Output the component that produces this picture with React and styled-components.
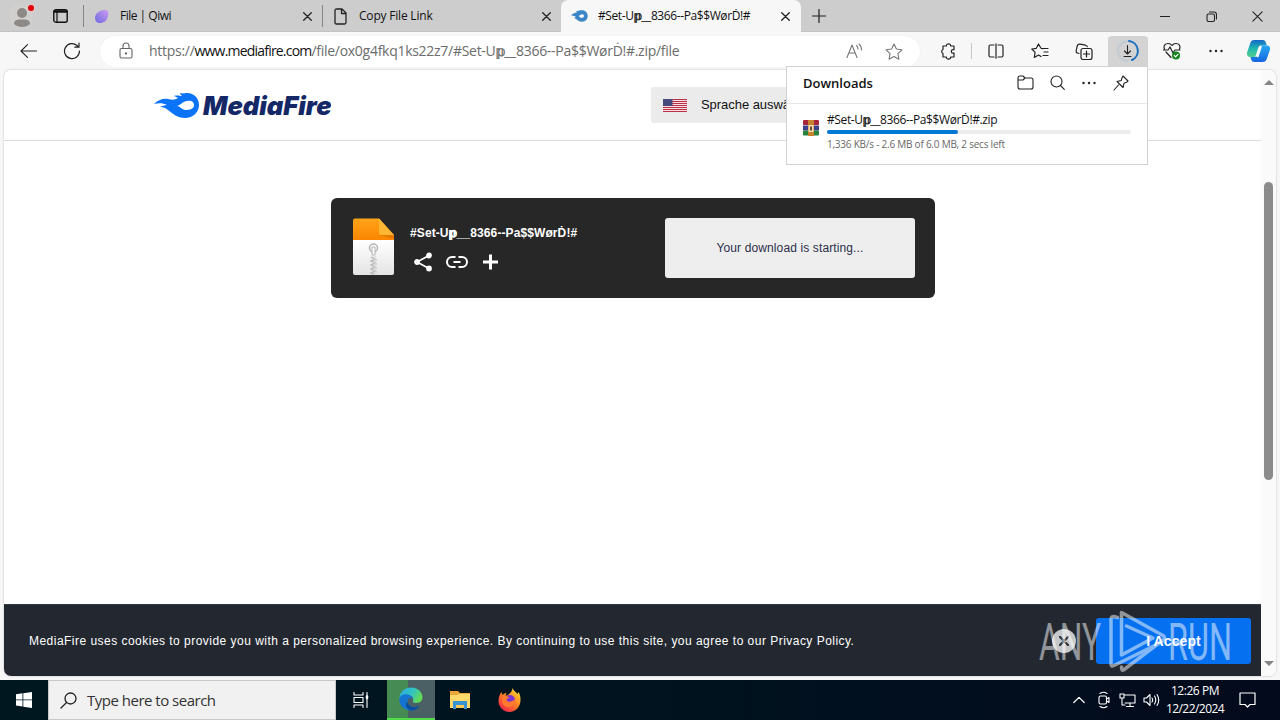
import React from 'react';
import styled, { createGlobalStyle } from 'styled-components';

const GlobalStyle = createGlobalStyle`
  * {
    box-sizing: border-box;
  }

  body {
    margin: 0;
    overflow: hidden;
  }

  svg {
    display: block;
    flex: none;
  }
`;

const uiFont = '"Open Sans", "Noto Sans", sans-serif';
const pageFont = '"Liberation Sans", Arial, sans-serif';

const Desktop = styled.div`
  display: flex;
  flex-direction: column;

  width: 1280px;
  height: 720px;

  background: #f7f7f7;
  color: #111;
  font-family: ${uiFont};
`;

const Label = styled.span`
  color: ${({ $color }) => $color || 'inherit'};
  font-size: ${({ $size }) => $size || 12}px;
  font-weight: ${({ $weight }) => $weight || 400};
  letter-spacing: ${({ $track }) => $track || 0}px;
  line-height: ${({ $line }) => $line || 16}px;
  white-space: pre;
`;

const HeavyGlyph = styled.span`
  margin-right: -1px;

  -webkit-text-stroke: 0.4px currentColor;
`;

const Slot = styled.div`
  display: flex;
  flex: none;
  align-items: center;
  justify-content: center;

  width: ${({ $w }) => $w}px;
  height: ${({ $h }) => ($h ? `${$h}px` : '100%')};
`;

/* ---------- tab strip ---------- */

const TabStrip = styled.div`
  display: flex;
  flex: none;

  height: 32px;

  background: #cdcdcd;
  box-shadow: inset 0 -1px 0 #c3c3c3;
`;

const Tab = styled.div`
  display: flex;
  flex: none;
  align-items: center;

  width: ${({ $w }) => $w}px;
  height: 32px;
  padding-left: ${({ $active }) => ($active ? 10 : 11)}px;

  background: ${({ $active }) => ($active ? '#f7f7f7' : 'transparent')};
  border-left: ${({ $active }) => ($active ? '0' : '1px solid #7c7c7c')};
  border-image: ${({ $active }) =>
    $active ? 'none' : 'linear-gradient(transparent 6px, #858585 6px, #858585 26px, transparent 26px) 1'};
  border-radius: ${({ $active }) => ($active ? '7px 7px 0 0' : '0')};
`;

const TabTitle = styled(Label)`
  flex: 1;

  margin-left: 10px;
`;

const Spacer = styled.div`
  flex: 1;
`;

/* ---------- toolbar ---------- */

const Toolbar = styled.div`
  display: flex;
  flex: none;
  align-items: center;

  height: 38px;
  padding: 0 0 0 6px;
`;

const AddressBar = styled.div`
  display: flex;
  flex: none;
  align-items: center;

  width: 820px;
  height: 31px;
  margin: 0 6px;
  padding: 0 6px 0 16px;

  background: #fff;
  border-radius: 16px;
  box-shadow: 0 0 1px #ddd;
`;

const Url = styled(Label)`
  flex: 1;

  margin-left: 13px;

  b {
    color: #111;
    font-weight: 400;
    letter-spacing: ${({ $hostTrack }) => $hostTrack}px;
  }
`;

const Divider = styled.div`
  width: 1px;
  height: 16px;
  margin: 0 1px;

  background: #c8c8c8;
`;

const DownloadButton = styled.div`
  display: flex;
  align-items: center;
  justify-content: center;

  width: 40px;
  height: 30px;

  background: #d3d3d3;
  border-radius: 4px 4px 0 0;
`;

/* ---------- web page ---------- */

const Viewport = styled.div`
  display: flex;
  flex: none;

  width: 1272px;
  height: 606px;
  margin: 0 4px 4px;
  overflow: hidden;

  background: #fff;
  border-radius: 7px;
  box-shadow: 0 0 1px 1px #e2e2e2;
`;

const Page = styled.div`
  display: flex;
  flex: 1;
  flex-direction: column;

  font-family: ${pageFont};
`;

const PageHeader = styled.header`
  display: flex;
  align-items: center;

  height: 71px;
  padding-left: 147px;

  border-bottom: 1px solid #dcdcdc;
`;

const LanguageSelect = styled.div`
  display: flex;
  align-items: center;

  width: 230px;
  height: 36px;
  margin-left: 320px;
  padding-left: 12px;

  background: #ebebeb;
  border-radius: 2px;

  span {
    margin-left: 14px;
  }
`;

const FileCard = styled.section`
  display: flex;
  align-items: center;

  width: 604px;
  height: 100px;
  margin: 57px 0 0 327px;
  padding: 0 20px 0 21px;

  background: #272727;
  border-radius: 6px;
`;

const FileInfo = styled.div`
  display: flex;
  flex: 1;
  flex-direction: column;
  gap: 11px;

  margin: 0 0 0 15px;
`;

const FileActions = styled.div`
  display: flex;
  gap: 12px;

  padding-left: 2px;
`;

const StatusBox = styled.div`
  display: flex;
  align-items: center;
  justify-content: center;

  width: 250px;
  height: 60px;

  background: #eee;
  border-radius: 3px;
`;

const CookieBar = styled.footer`
  display: flex;
  align-items: center;

  height: 72px;
  margin-top: auto;
  padding: 0 10px 0 25px;

  background: #232830;
  border-top: 1px solid #353a42;
`;

const CloseCircle = styled.div`
  display: flex;
  align-items: center;
  justify-content: center;

  width: 24px;
  height: 24px;
  margin: 0 20px 0 auto;

  background: #c6c7c8;
  border-radius: 50%;
`;

const AcceptButton = styled.div`
  display: flex;
  align-items: center;
  justify-content: center;

  width: 155px;
  height: 46px;

  background: #0570f0;
  border-radius: 3px;
`;

const Scrollbar = styled.div`
  display: flex;
  flex: none;
  flex-direction: column;
  align-items: center;

  width: 15px;
  padding: 10px 0;

  background: #fafafa;
`;

const Arrow = styled.div`
  border: 5px solid transparent;
  border-top-width: ${({ $down }) => ($down ? 5 : 0)}px;
  border-bottom-width: ${({ $down }) => ($down ? 0 : 5)}px;
  border-top-color: #858585;
  border-bottom-color: #858585;
`;

const Thumb = styled.div`
  width: 9px;
  height: 298px;
  margin: 97px 0 auto;

  background: #8b8b8b;
  border-radius: 5px;
`;

/* ---------- downloads flyout ---------- */

const Flyout = styled.div`
  position: absolute;
  top: 66px;
  left: 786px;

  display: flex;
  flex-direction: column;

  width: 362px;
  height: 99px;

  background: #fff;
  border: 1px solid #d2d2d2;
`;

const FlyoutHeader = styled.div`
  display: flex;
  flex: none;
  align-items: center;

  height: 37px;
  padding: 0 10px 5px 16px;

  border-bottom: 1px solid #e8e8e8;
`;

const DownloadItem = styled.div`
  display: flex;
  gap: 8px;

  padding: 8px 16px 0;
`;

const DownloadText = styled.div`
  display: flex;
  flex: 1;
  flex-direction: column;
`;

const Track = styled.div`
  height: 4px;
  margin: 2px 0;

  background: #ececec;
  border-radius: 2px;
`;

const TrackFill = styled.div`
  height: 4px;

  background: #0078d4;
  border-radius: 2px;
`;

/* ---------- taskbar ---------- */

const Taskbar = styled.div`
  display: flex;
  flex: none;
  align-items: center;

  height: 40px;

  background: linear-gradient(90deg, #00171f, #00131f 50%, #030a1c);
`;

const SearchBox = styled.div`
  display: flex;
  align-items: center;

  width: 288px;
  height: 40px;
  padding-left: 11px;

  background: #f1f1f1;
  border: 1px solid #c6c8c9;

  span {
    margin-left: 10px;
  }
`;

const EdgeButton = styled.div`
  display: flex;
  align-items: center;
  justify-content: center;

  width: 48px;
  height: 40px;

  background: linear-gradient(90deg, #468b53 21px, #4a6065 21px);
  border-bottom: 2px solid #52dc4a;
`;

const Clock = styled.div`
  display: flex;
  flex-direction: column;
  align-items: center;

  width: 64px;

  color: #fff;
`;

const Watermark = styled.div`
  position: absolute;
  top: 604px;
  left: 1034px;
`;

/* ---------- drawings ---------- */

function Icon({ w = 18, h, stroke = '#222', sw = 1.1, box, children }) {
  const height = h || w;
  return (
    <svg
      width={w}
      height={height}
      viewBox={box || `0 0 ${w} ${height}`}
      fill="none"
      stroke={stroke}
      strokeWidth={sw}
      strokeLinecap="round"
      strokeLinejoin="round"
    >
      {children}
    </svg>
  );
}

function CloseIcon({ size = 9, sw = 1.3, stroke }) {
  return (
    <Icon w={size} box="0 0 9 9" sw={sw} stroke={stroke}>
      <path d="M.7.7l7.6 7.6M8.3.7L.7 8.3" />
    </Icon>
  );
}

function DotsIcon() {
  return (
    <svg width="14" height="4" viewBox="0 0 14 4" fill="#222">
      <circle cx="1.5" cy="2" r="1.2" />
      <circle cx="7" cy="2" r="1.2" />
      <circle cx="12.5" cy="2" r="1.2" />
    </svg>
  );
}

function ProfileIcon() {
  return (
    <svg width="26" height="30" viewBox="0 0 26 30">
      <circle cx="12" cy="15" r="12" fill="#d2d0ce" />
      <circle cx="13" cy="12" r="5" fill="#8c8986" />
      <path d="M5 23c0-4.500 4-4.500 8-4.500s8 0 8 4.500c-2 2-5 3-8 3s-6-1-8-3z" fill="#8c8986" />
      <circle cx="22" cy="7" r="4" fill="#e3c9c9" />
      <circle cx="22" cy="7" r="3" fill="#e0000c" />
    </svg>
  );
}

function FlameIcon({ w, h, color }) {
  return (
    <svg width={w} height={h} viewBox="0 0 46 26">
      <path
        fill={color}
        fillRule="evenodd"
        d="M0 12c4-4 9-6 14-5 4 1 7 1 10-1-2-1-3-2-4-2 3-1 6 0 8 0-1-1-2-2-2-3 3 1 4 0 7 0 7 0 12 5 12 12s-6 13-14 13c-8 0-13-5-17-8-2-2-5-3-8-3 2-1 5-2 7-2-4-2-8-2-13-1zm23 2c3 0 4 3 8 4 5 0 9-1 9-5s-4-5-7-4c-4 0-6 4-10 5z"
      />
    </svg>
  );
}

function SmallFlameIcon() {
  return (
    <svg width="17" height="12" viewBox="0 0 17 12">
      <path
        fill="#3b86c6"
        fillRule="evenodd"
        d="M0 5.500C2 3 4 3 6 2.500L5 1.500C7 1 8 .3 11 .3c3.500 0 5.700 2.500 5.700 5.700S14.500 11.700 11 11.700C7 11.700 6 9 3 8l2-1C3.500 6 2 5.500 0 5.500zm8 .7c1 2 5 2.300 5-.2s-3.500-2.300-5 .2z"
      />
    </svg>
  );
}

function MediaFireLogo() {
  return (
    <svg width="180" height="28" viewBox="0 0 180 28">
      <g transform="translate(3 1)">
        <FlameIcon w={46} h={26} color="#0a73f8" />
      </g>
      <text
        x="52"
        y="24"
        fill="#142766"
        fontFamily="Inter, sans-serif"
        fontSize="26"
        fontStyle="italic"
        fontWeight="900"
        textLength="128.500"
        lengthAdjust="spacingAndGlyphs"
      >
        MediaFire
      </text>
    </svg>
  );
}

function FlagIcon() {
  return (
    <svg width="24" height="13" viewBox="0 0 24 13">
      <rect width="24" height="13" fill="#f3dfe3" />
      {[0, 2, 4, 6, 8, 10, 12].map((y) => (
        <rect key={y} y={y} width="24" height="1" fill="#bd3146" />
      ))}
      <rect width="9.5" height="7" fill="#454a7c" />
    </svg>
  );
}

function ZipFileIcon() {
  return (
    <svg width="43" height="60" viewBox="0 0 43 60">
      <defs>
        <linearGradient id="paper" x1="0" y1="0" x2="0" y2="1">
          <stop offset="0" stopColor="#fff" />
          <stop offset="1" stopColor="#e4e4e4" />
        </linearGradient>
        <linearGradient id="cap" x1="0" y1="0" x2="0" y2="1">
          <stop offset="0" stopColor="#ffa41a" />
          <stop offset="1" stopColor="#fb8500" />
        </linearGradient>
      </defs>
      <path d="M1 22h41v33q0 2-2 2H3q-2 0-2-2z" fill="url(#paper)" />
      <path d="M1 22V2.500q0-2 2-2h24l15 16.500v5z" fill="url(#cap)" />
      <path d="M27 .5V15q0 2 2 2h13z" fill="#ffb733" />
      <path d="M27 17h15v4z" fill="#e77b00" />
      <circle cx="21.500" cy="30" r="4" fill="none" stroke="#b4b4b4" strokeWidth="1.500" />
      <path d="M20 29h3v8h-3z" fill="#fff" stroke="#b4b4b4" />
      <path d="M19 39l4 2-4 2 4 2-4 2 4 2-4 2 4 2-4 2 3 1.500" fill="none" stroke="#bdbdbd" strokeWidth="1.500" />
      <path d="M24 38l-3 2 4 2-4 2 4 2-4 2 4 2-4 2 4 2-3 2" fill="none" stroke="#d2d2d2" />
    </svg>
  );
}

function RarIcon() {
  return (
    <svg width="16" height="16" viewBox="0 0 16 16">
      <rect width="16" height="5" rx="1" fill="#a8243a" />
      <rect y="5.500" width="16" height="5" fill="#3c3f8e" />
      <rect y="10.500" width="16" height="5" rx="1" fill="#26813e" />
      <rect x="5" width="6" height="16" fill="#c8812e" />
      <rect x="5.500" y="5" width="5" height="7" fill="#f1e0b8" />
      <rect x="7" y="6.500" width="2" height="4" fill="#6c4a24" />
    </svg>
  );
}

function CopilotIcon() {
  return (
    <svg width="25" height="24" viewBox="0 0 24 24">
      <defs>
        <linearGradient id="coA" x1="0" y1="0" x2="0" y2="1">
          <stop offset="0" stopColor="#1768c9" />
          <stop offset=".5" stopColor="#1fb8b0" />
          <stop offset="1" stopColor="#54d18a" />
        </linearGradient>
        <linearGradient id="coB" x1="0" y1="0" x2="0" y2="1">
          <stop offset="0" stopColor="#27a8f0" />
          <stop offset="1" stopColor="#1666e0" />
        </linearGradient>
      </defs>
      <path d="M8 1h8c2 0 3 1 3.500 3l.8 2.500H15c-2 0-3 1-3.500 3l-2 6.500c-.5 1.500-1 2-2.500 2H3.500C1 18 0 16 .6 13.500l3-9C4.300 2 5.500 1 8 1z" fill="url(#coA)" />
      <path d="M16 23H8c-2 0-3-1-3.500-3l-.6-2H8c2 0 3-1 3.500-3l2-6.500C14 7 14.500 6.500 16 6.500h4.500C23 6.500 24 8.500 23.400 11l-3 8.500C19.700 22 18.500 23 16 23z" fill="url(#coB)" />
      <path d="M14 8l-3 9" stroke="#f2f8fb" strokeWidth="2.500" strokeLinecap="round" />
    </svg>
  );
}

function EdgeIcon() {
  return (
    <svg width="24" height="24" viewBox="0 0 24 24">
      <defs>
        <linearGradient id="edA" x1="0" y1="0" x2="1" y2=".4">
          <stop offset="0" stopColor="#2aa8e2" />
          <stop offset=".6" stopColor="#31c4c0" />
          <stop offset="1" stopColor="#62d957" />
        </linearGradient>
      </defs>
      <path d="M.3 11C1 4.500 6 .5 12 .5c7 0 11.500 5 11.500 9.800 0 3.700-2.700 5.700-6 5.700-3 0-4.200-1-3.700-2 .8-1.300.8-5.500-4-5.500C5 8.500 1 9.500.3 11z" fill="url(#edA)" />
      <path d="M.3 11C1.500 8 5.500 6.700 9 7.500c3 .7 4.700 2.500 4.900 4.500-1-1.800-5.400-1.500-5.400 2.500 0 4.500 6 7.500 12 4-2 3.500-5 5-8.500 5C5 23.500-.3 18 .3 11z" fill="#1474cf" />
      <path d="M8.500 14.500c0 4.500 6 7.500 12 4-2 3.500-5 5-8 5-4.500-.5-7.500-6-4-9z" fill="#0c4e9b" />
    </svg>
  );
}

function FolderIcon() {
  return (
    <svg width="22" height="20" viewBox="0 0 22 20">
      <path d="M1 1h8l2 2h10v15H1z" fill="#eea83a" />
      <path d="M1 5h7l2-1h11v14H1z" fill="#ffd96b" />
      <path d="M4 11h14v8h-3v-4H7v4H4z" fill="#3b92d1" />
      <rect x="7" y="15" width="8" height="3" fill="#f7cb55" />
    </svg>
  );
}

function FirefoxIcon() {
  return (
    <svg width="23" height="24" viewBox="0 0 22 24">
      <defs>
        <linearGradient id="ff" x1=".9" y1="0" x2=".2" y2="1">
          <stop offset="0" stopColor="#ffe33b" />
          <stop offset=".45" stopColor="#ff8a22" />
          <stop offset="1" stopColor="#f0204f" />
        </linearGradient>
      </defs>
      <path d="M14 0c1 3 4 4 5 6l1-2c2 3 2 6 2 8 0 7-5 12-11 12S0 19 0 13c0-4 1-6 3-9l1 3c1-1 2-2 4-2l-1 3c3-1 7-4 7-8z" fill="url(#ff)" />
      <circle cx="11.500" cy="12" r="5" fill="#7a35d2" />
      <path d="M4 8c3-1 5 0 7 2-2 0-3 1-3 2 1 3 6 2 8-1 1 5-2 8-6 8-5 0-8-5-6-11z" fill="#ff7a2e" />
    </svg>
  );
}

/* ---------- screen ---------- */

function FileName({ suffix = '' }) {
  return (
    <>
      #Set-U
      <HeavyGlyph>𝕡</HeavyGlyph>
      {`__8366--Pa$$WørḊ!#${suffix}`}
    </>
  );
}

function BrowserTabs() {
  return (
    <TabStrip>
      <Slot $w={44}>
        <ProfileIcon />
      </Slot>
      <Slot $w={32}>
        <Icon w={15} h={14} sw={1.4} stroke="#111">
          <rect x=".8" y=".8" width="13.400" height="12.400" rx="2" />
          <path d="M1.500 2.500h12" strokeWidth="2.500" />
          <path d="M4 3v10" strokeWidth="1.200" />
        </Icon>
      </Slot>
      <Slot $w={7} />
      <Tab $w={239}>
        <svg width="15" height="15" viewBox="0 0 15 15">
          <defs>
            <linearGradient id="qiwi" x1="1" y1="0" x2="0" y2="1">
              <stop offset="0" stopColor="#cf9bf0" />
              <stop offset="1" stopColor="#6c6ae0" />
            </linearGradient>
          </defs>
          <path d="M0 9c0-5 5-8 10-8 3 0 4 2 3 6-1 5-4 7-8 7-3 0-5-2-5-5z" fill="url(#qiwi)" />
        </svg>
        <TabTitle $track={-0.5}>File | Qiwi</TabTitle>
        <Slot $w={30}>
          <CloseIcon />
        </Slot>
      </Tab>
      <Tab $w={239}>
        <Icon w={15} h={17} sw={1.3}>
          <path d="M1 2.500q0-1.500 1.500-1.500H8l4 4v9.500q0 1.500-1.500 1.500h-8Q1 16 1 14.500zM7.500 1v4.500H12" />
        </Icon>
        <TabTitle $track={-0.2}>Copy File Link</TabTitle>
        <Slot $w={30}>
          <CloseIcon />
        </Slot>
      </Tab>
      <Tab $w={240} $active>
        <SmallFlameIcon />
        <TabTitle $track={-0.4}>
          <FileName />
        </TabTitle>
        <Slot $w={32}>
          <CloseIcon />
        </Slot>
      </Tab>
      <Slot $w={36}>
        <Icon w={14} sw={1.2}>
          <path d="M7 .5v13M.5 7h13" />
        </Icon>
      </Slot>
      <Spacer />
      <Slot $w={46}>
        <Icon w={10} sw={1}>
          <path d="M0 5.500h10" />
        </Icon>
      </Slot>
      <Slot $w={46}>
        <Icon w={11} sw={1.1}>
          <rect x="1" y="3" width="7.500" height="7.500" rx="1.500" />
          <path d="M3.500 1h4.500q2.500 0 2.500 2.500V8" />
        </Icon>
      </Slot>
      <Slot $w={46}>
        <CloseIcon size={11} sw={0.9} />
      </Slot>
    </TabStrip>
  );
}

function BrowserToolbar() {
  return (
    <Toolbar>
      <Slot $w={44}>
        <Icon w={17} h={14}>
          <path d="M7.500.7L1 7l6.500 6.300M1 7h15.500" />
        </Icon>
      </Slot>
      <Slot $w={44}>
        <Icon w={18} sw={1.2}>
          <path d="M16.500 9A7.500 7.500 0 1 1 14 3.500l1.500 1.500M16 1v4.200h-4.200" />
        </Icon>
      </Slot>
      <AddressBar>
        <Icon w={20} h={18} stroke="#666">
          <path d="M5.500 6.500h9q1.500 0 1.500 1.500v6.500q0 1.500-1.500 1.500h-9Q4 16 4 14.500V8q0-1.500 1.500-1.500zM7 6.500V4q0-3 3-3t3 3v2.500" />
          <circle cx="10" cy="11.500" r=".6" fill="#666" />
        </Icon>
        <Url $size={14} $line={20} $color="#6c6c6c" $track={-0.28} $hostTrack={-0.8}>
          https://
          <b>www.mediafire.com</b>
          /file/ox0g4fkq1ks22z7/
          <FileName suffix=".zip/file" />
        </Url>
        <Slot $w={40}>
          <Icon w={17} h={16} stroke="#777">
            <path d="M1 14.500L6 2l5 12.500M2.800 10h6.500M10.500 2.500q1.500 1.300 1.500 3.500M13 1q2.500 2 2.500 6" />
          </Icon>
        </Slot>
        <Slot $w={40}>
          <Icon w={18} h={17} stroke="#777">
            <path d="M9 1l2.400 5 5.500.8-4 3.900 1 5.500L9 13.600l-4.900 2.600 1-5.500-4-3.900 5.500-.8z" />
          </Icon>
        </Slot>
      </AddressBar>
      <Slot $w={44}>
        <Icon w={17} h={18} sw={1.2}>
          <path d="M3 4h3.300a2.200 2.200 0 1 1 4.400 0H14v3.700h-1a1.700 1.700 0 0 0 0 3.400h1V15h-3.300a2.200 2.200 0 0 1-4.400 0H3v-3.500a2.200 2.200 0 0 1 0-4z" />
        </Icon>
      </Slot>
      <Divider />
      <Slot $w={45}>
        <Icon w={16} h={16} sw={1.2}>
          <path d="M6 2H2.500Q1 2 1 3.500v9Q1 14 2.500 14H6M10 2h3.500Q15 2 15 3.500v9q0 1.500-1.500 1.500H10M8 .8v14.400" />
        </Icon>
      </Slot>
      <Slot $w={44}>
        <Icon w={18} h={16} sw={1.2}>
          <path d="M11.500 5.500h5.500M13 9h4M12 12.500h5M10 5.200L7.500 1 5.300 5.300.8 6l3.300 3.300-.8 5.200L7.500 12l2.500 1.500M10 5.200l1.500.5" />
        </Icon>
      </Slot>
      <Slot $w={44}>
        <Icon w={18} h={17} sw={1.2}>
          <rect x="6" y="5.500" width="11" height="11" rx="2" />
          <path d="M11.500 8v6M8.500 11h6M4 10.500L2.500 10Q.8 9.500 1.200 7.500l1-4.500Q2.800.8 5 1.200l5.500 1q1.500.5 1.800 1.500" />
        </Icon>
      </Slot>
      <Slot $w={44}>
        <DownloadButton>
          <Icon w={22} h={24} sw={1.1}>
            <path d="M10.500 6.500v8.500M7.500 12l3 3 3-3M7 17.500h7" />
            <path d="M11 2a10 10 0 1 0 0 20" stroke="#c2cad2" strokeWidth="2" />
            <path d="M12 2a10 10 0 0 1 3 19" stroke="#1c6fc0" strokeWidth="2" />
          </Icon>
        </DownloadButton>
      </Slot>
      <Slot $w={44}>
        <Icon w={18} h={18} sw={1.2}>
          <path d="M1.500 7C0 3.500 2.500 1.500 5 1.500c2 0 3.300 1 4 2 .7-1 2-2 4-2 2.500 0 5 2 3.500 5.500M3 10l5 5.500M0.500 8H5l2-3 3 6 2-3h5" />
          <circle cx="13" cy="13.500" r="4" fill="#16851e" stroke="none" />
          <path d="M11.300 13.500l1.300 1.300 2.300-2.500" stroke="#fff" />
        </Icon>
      </Slot>
      <Slot $w={44}>
        <DotsIcon />
      </Slot>
      <Slot $w={40}>
        <CopilotIcon />
      </Slot>
    </Toolbar>
  );
}

function DownloadsFlyout({ progress }) {
  return (
    <Flyout>
      <FlyoutHeader>
        <Label $size={13} $weight={600}>
          Downloads
        </Label>
        <Spacer />
        <Slot $w={32}>
          <Icon w={17} h={15}>
            <path d="M1 3Q1 1 3 1h3l2 2h6q2 0 2 2v7q0 2-2 2H3q-2 0-2-2zM1 5h5l2-2" />
          </Icon>
        </Slot>
        <Slot $w={32}>
          <Icon w={15}>
            <circle cx="6.500" cy="6.500" r="5.500" />
            <path d="M10.500 10.500L14.300 14.300" />
          </Icon>
        </Slot>
        <Slot $w={32}>
          <DotsIcon />
        </Slot>
        <Slot $w={32}>
          <Icon w={16}>
            <path d="M10 1l5 5-1 1-3 1.300-1 4.200-6-6 4.200-1 1-3.200zM5.500 10L1 15" />
          </Icon>
        </Slot>
      </FlyoutHeader>
      <DownloadItem>
        <Slot $w={16} $h={32}>
          <RarIcon />
        </Slot>
        <DownloadText>
          <Label $track={-0.38}>
            <FileName suffix=".zip" />
          </Label>
          <Track>
            <TrackFill style={{ width: `${progress}%` }} />
          </Track>
          <Label $size={10} $color="#686868" $track={-0.23}>
            1,336 KB/s - 2.6 MB of 6.0 MB, 2 secs left
          </Label>
        </DownloadText>
      </DownloadItem>
    </Flyout>
  );
}

function WebPage() {
  return (
    <Viewport>
      <Page>
        <PageHeader>
          <MediaFireLogo />
          <LanguageSelect>
            <FlagIcon />
            <Label $size={13} $track={-0.05}>
              Sprache auswählen
            </Label>
          </LanguageSelect>
        </PageHeader>
        <FileCard>
          <ZipFileIcon />
          <FileInfo>
            <Label $size={12} $weight={700} $color="#fff" $track={0.1}>
              <FileName />
            </Label>
            <FileActions>
              <Icon w={22} h={20} stroke="#fff" sw={1.8}>
                <path d="M17 3.500L5 10l12 6.500" />
                <circle cx="17" cy="3.500" r="2" fill="#fff" />
                <circle cx="5" cy="10" r="2" fill="#fff" />
                <circle cx="17" cy="16.500" r="2" fill="#fff" />
              </Icon>
              <Icon w={22} h={20} stroke="#fff" sw={2}>
                <path d="M9.500 5H6a5 5 0 0 0 0 10h3.500M12.500 5H16a5 5 0 0 1 0 10h-3.500M7.500 10h7" strokeLinecap="butt" />
              </Icon>
              <Icon w={22} h={20} stroke="#fff" sw={3}>
                <path d="M10.500 2.500v15M3 10h15" strokeLinecap="butt" />
              </Icon>
            </FileActions>
          </FileInfo>
          <StatusBox>
            <Label $size={12} $color="#2c2e4a" $track={0.12}>
              Your download is starting...
            </Label>
          </StatusBox>
        </FileCard>
        <CookieBar>
          <Label $size={12} $color="#fff" $track={0.475}>
            MediaFire uses cookies to provide you with a personalized browsing experience. By continuing to use this
            {' site, you agree to our Privacy Policy.'}
          </Label>
          <CloseCircle>
            <CloseIcon size={10} sw={2} stroke="#30343b" />
          </CloseCircle>
          <AcceptButton>
            <Label $size={14} $weight={700} $color="#fff" $track={0.1}>
              I Accept
            </Label>
          </AcceptButton>
        </CookieBar>
      </Page>
      <Scrollbar>
        <Arrow />
        <Thumb />
        <Arrow $down />
      </Scrollbar>
    </Viewport>
  );
}

function SystemTaskbar() {
  return (
    <Taskbar>
      <Slot $w={48}>
        <svg width="16" height="16" viewBox="0 0 16 16" fill="#fff">
          <path d="M0 2.200l6.500-.9v6.200H0zM7.300 1.200L16 0v7.500H7.300zM0 8.300h6.500v6.200L0 13.600zM7.300 8.300H16V16l-8.700-1.200z" />
        </svg>
      </Slot>
      <SearchBox>
        <Icon w={17} h={17} sw={1.3}>
          <circle cx="10.500" cy="6.500" r="5.500" />
          <path d="M6.500 10.500L1 16" />
        </Icon>
        <Label $size={15} $line={20} $color="#333" $track={-0.5}>
          Type here to search
        </Label>
      </SearchBox>
      <Slot $w={51}>
        <Icon w={18} h={16} stroke="#fff" sw={1.1}>
          <path d="M1 .5V3h9V.5M1 5.500h9v5H1zM1 15.500V13h9v2.500M14 .5v15" />
          <path d="M14 4.500v1.500" strokeWidth="2.500" />
        </Icon>
      </Slot>
      <EdgeButton>
        <EdgeIcon />
      </EdgeButton>
      <Slot $w={50}>
        <FolderIcon />
      </Slot>
      <Slot $w={48}>
        <FirefoxIcon />
      </Slot>
      <Spacer />
      <Slot $w={26}>
        <Icon w={12} h={8} stroke="#fff" sw={1.2}>
          <path d="M.8 6.500L6 1.300l5.200 5.200" />
        </Icon>
      </Slot>
      <Slot $w={23}>
        <Icon w={14} h={18} stroke="#fff" sw={1.1}>
          <rect x="2" y="5" width="7.500" height="8" rx="1.500" />
          <path d="M9.500 8l2.500-1.500v5L9.500 10M3 2.500q3.500-2.500 7 0M3 15.500q3.500 2.500 7 0" />
        </Icon>
      </Slot>
      <Slot $w={24}>
        <Icon w={17} h={16} stroke="#fff" sw={1.1}>
          <path d="M5.500 3H16v8H6M1 2h4v4H1zM3 6v7h3M11 11v3M7.500 14.500h7" />
        </Icon>
      </Slot>
      <Slot $w={24}>
        <Icon w={17} h={14} stroke="#fff" sw={1.1}>
          <path d="M1 5h2.500L7 1.500v11L3.500 9H1zM9 5q1.300 2 0 4M11.500 3q2.500 4 0 8M14 1.500q3.500 5.500 0 11" />
        </Icon>
      </Slot>
      <Clock>
        <Label $track={-0.45} $line={18}>
          12:26 PM
        </Label>
        <Label $track={-0.55} $line={18}>
          12/22/2024
        </Label>
      </Clock>
      <Slot $w={40}>
        <Icon w={17} h={16} stroke="#fff" sw={1.2}>
          <path d="M1 1h15v11.500h-5l-2.500 2.500L6 12.500H1z" />
        </Icon>
      </Slot>
      <Slot $w={13} />
    </Taskbar>
  );
}

function AnyRunMark() {
  const textProps = {
    y: 55.5,
    fontFamily: 'Roboto, sans-serif',
    fontSize: 52,
    fontWeight: 400,
    lengthAdjust: 'spacingAndGlyphs',
    fill: '#fff',
  };
  return (
    <Watermark>
      <svg width="206" height="76" viewBox="0 0 206 76" opacity=".5">
        <text x="5" textLength="62" {...textProps}>
          ANY
        </text>
        <g fill="none" stroke="#fff" strokeWidth="3.500" strokeLinejoin="round" strokeLinecap="round">
          <path d="M83.500 13.500L80 12.500q-3 0-3 3V60q0 3 3 1.500L128 38" />
          <path d="M92.500 22L119 34 87.500 51V8.500L129 31.500q3 2 0 4.500L89.500 66q-2 1-2-3" />
        </g>
        <text x="134" textLength="64" {...textProps}>
          RUN
        </text>
      </svg>
    </Watermark>
  );
}

export default function App() {
  return (
    <Desktop>
      <GlobalStyle />
      <BrowserTabs />
      <BrowserToolbar />
      <WebPage />
      <SystemTaskbar />
      <DownloadsFlyout progress={43} />
      <AnyRunMark />
    </Desktop>
  );
}
